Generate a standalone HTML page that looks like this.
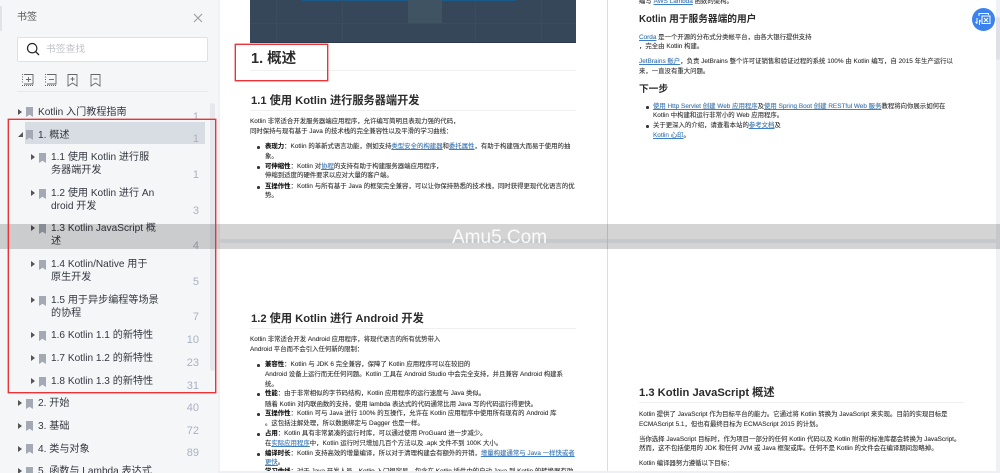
<!DOCTYPE html>
<html lang="zh"><head><meta charset="utf-8"><style>
html,body{margin:0;padding:0;width:1000px;height:473px;overflow:hidden;background:#f0f1f5}
body{position:relative;font-family:"Liberation Sans","Noto Sans CJK SC",sans-serif}
div,a,svg{position:absolute}
.t{white-space:nowrap;line-height:12px;height:12px}
.s{font-size:10.1px;color:#33373f;margin-top:1.5px}
.n{font-size:11px;color:#aab1c2;width:30px;text-align:right;left:169px;line-height:12px;margin-top:1px}
.p{font-size:6.4px;color:#333;white-space:nowrap;line-height:10px;height:10px;margin-top:1px;text-shadow:0 0 .4px rgba(0,0,0,.45)}
.p a{position:static;color:#3b7fc4;text-decoration:underline}
.p b{color:#111}
.h{font-weight:bold;color:#2b2b2b;white-space:nowrap;line-height:14px;margin-top:1px}
.l{height:1px;background:#f0f0f0}
.d{width:2.5px;height:2.5px;border-radius:50%;background:#333;margin-top:1px}
.ar{width:0;height:0;border-left:4px solid #555;border-top:3.5px solid transparent;border-bottom:3.5px solid transparent;margin-top:1px}
.bm{width:7px;height:10px;background:#a4a9b3;clip-path:polygon(0 0,100% 0,100% 100%,50% 78%,0 100%);margin-top:1px}
.g{background:#3b4c5f}
</style></head><body>
<div style="left:0;top:0;width:218px;height:473px;background:#f5f6f8"></div>
<div style="left:0;top:6px;width:2px;height:25px;background:#e0e3e8"></div>
<div class="t" style="left:17px;top:12px;font-size:10px;color:#555">书签</div>
<svg style="left:193px;top:13px" width="10" height="10" viewBox="0 0 10 10"><path d="M1 1L9 9M9 1L1 9" stroke="#999" stroke-width="1" fill="none"/></svg>
<div style="left:17px;top:37px;width:189px;height:23px;background:#fff;border:1px solid #dfe1e6;border-radius:2px"></div>
<svg style="left:26px;top:42px" width="14" height="14" viewBox="0 0 14 14"><circle cx="6.2" cy="6.2" r="4.7" stroke="#222" stroke-width="1.2" fill="none"/><path d="M9.6 9.6L13 13" stroke="#222" stroke-width="1.3"/></svg>
<div class="t" style="left:46px;top:44px;font-size:9.8px;color:#c0c2c8">书签查找</div>
<svg style="left:21px;top:73px" width="84" height="14" viewBox="0 0 84 14" fill="none" stroke="#666" stroke-width=".9">
<path d="M3 1.5H12V11H3" /><path d="M1 1.5H2M1 4H2M1 6.5H2M1 9H2M1 12.5H12" stroke-dasharray="1 1"/><path d="M5 6.5H10M7.5 4V9"/>
<path d="M26 1.5H35V11H26"/><path d="M24 1.5H25M24 4H25M24 6.5H25M24 9H25M24 12.5H35" stroke-dasharray="1 1"/><path d="M28 6.5H33"/>
<path d="M47 1.5H56V13L51.5 10L47 13Z"/><path d="M49.5 6H53.5M51.5 4V8"/>
<path d="M70 1.5H79V13L74.5 10L70 13Z"/><path d="M72.5 6H76.5"/></svg>
<div style="left:17px;top:91px;width:191px;height:1px;background:#e6e8ec"></div>
<div style="left:25px;top:122px;width:180px;height:22px;background:#d8dce3"></div>
<div style="left:210px;top:103px;width:5px;height:268px;border-radius:3px;background:#e6e8ec"></div>

<div class="ar" style="left:18px;top:108px"></div><div class="bm" style="left:26px;top:106px"></div><div class="t s" style="left:38px;top:105px">Kotlin 入门教程指南</div><div class="n" style="top:110px">1</div>
<div style="left:18px;top:132px;width:0;height:0;border-bottom:5px solid #555;border-left:5px solid transparent"></div><div class="bm" style="left:26px;top:129px"></div><div class="t s" style="left:38px;top:128px">1. 概述</div><div class="n" style="top:132px">1</div>

<div class="ar" style="left:31px;top:153px"></div><div class="bm" style="left:39px;top:152px"></div><div class="t s" style="left:51px;top:150px">1.1 使用 Kotlin 进行服</div><div class="t s" style="left:51px;top:163px">务器端开发</div><div class="n" style="top:168px">1</div>
<div class="ar" style="left:31px;top:189px"></div><div class="bm" style="left:39px;top:188px"></div><div class="t s" style="left:51px;top:186px">1.2 使用 Kotlin 进行 An</div><div class="t s" style="left:51px;top:199px">droid 开发</div><div class="n" style="top:204px">3</div>
<div class="ar" style="left:31px;top:224px"></div><div class="bm" style="left:39px;top:223px"></div><div class="t s" style="left:51px;top:221px">1.3 Kotlin JavaScript 概</div><div class="t s" style="left:51px;top:234px">述</div><div class="n" style="top:239px">4</div>
<div class="ar" style="left:31px;top:260px"></div><div class="bm" style="left:39px;top:259px"></div><div class="t s" style="left:51px;top:257px">1.4 Kotlin/Native 用于</div><div class="t s" style="left:51px;top:270px">原生开发</div><div class="n" style="top:275px">5</div>
<div class="ar" style="left:31px;top:296px"></div><div class="bm" style="left:39px;top:295px"></div><div class="t s" style="left:51px;top:293px">1.5 用于异步编程等场景</div><div class="t s" style="left:51px;top:306px">的协程</div><div class="n" style="top:310px">7</div>
<div class="ar" style="left:31px;top:331px"></div><div class="bm" style="left:39px;top:330px"></div><div class="t s" style="left:51px;top:328px">1.6 Kotlin 1.1 的新特性</div><div class="n" style="top:333px">10</div>
<div class="ar" style="left:31px;top:354px"></div><div class="bm" style="left:39px;top:353px"></div><div class="t s" style="left:51px;top:351px">1.7 Kotlin 1.2 的新特性</div><div class="n" style="top:356px">23</div>
<div class="ar" style="left:31px;top:377px"></div><div class="bm" style="left:39px;top:376px"></div><div class="t s" style="left:51px;top:374px">1.8 Kotlin 1.3 的新特性</div><div class="n" style="top:379px">31</div>
<div class="ar" style="left:18px;top:399px"></div><div class="bm" style="left:26px;top:398px"></div><div class="t s" style="left:38px;top:396px">2. 开始</div><div class="n" style="top:401px">40</div>
<div class="ar" style="left:18px;top:422px"></div><div class="bm" style="left:26px;top:420px"></div><div class="t s" style="left:38px;top:419px">3. 基础</div><div class="n" style="top:424px">72</div>
<div class="ar" style="left:18px;top:445px"></div><div class="bm" style="left:26px;top:443px"></div><div class="t s" style="left:38px;top:442px">4. 类与对象</div><div class="n" style="top:446px">89</div>
<div class="ar" style="left:18px;top:467px"></div><div class="bm" style="left:26px;top:466px"></div><div class="t s" style="left:38px;top:464px">5. 函数与 Lambda 表达式</div>

<!-- pages -->
<div style="left:220px;top:0;width:387px;height:473px;background:#fff"></div>
<div style="left:608px;top:0;width:388px;height:473px;background:#fff"></div>
<div style="left:218px;top:239px;width:782px;height:4px;background:#f0f1f5"></div>
<div style="left:607px;top:0;width:1px;height:473px;background:#dcdde0"></div>

<!-- dark banner -->
<div style="left:250px;top:0;width:326px;height:43px;background:#36475a;border-bottom:1px solid #2c3b4b;box-sizing:border-box"></div>
<div style="left:302px;top:0;width:214px;height:1px;background:#1a5a8a"></div>
<div style="left:408px;top:0;width:34px;height:24px;background:#405362"></div>
<div class="g" style="left:250px;top:23px;width:326px;height:1px"></div>
<div class="g" style="left:276px;top:0;width:1px;height:42px"></div>
<div class="g" style="left:342px;top:0;width:1px;height:42px"></div>
<div class="g" style="left:475px;top:0;width:1px;height:42px"></div>
<div class="g" style="left:541px;top:0;width:1px;height:42px"></div>

<div class="h" style="left:251px;top:50px;font-size:14.5px;line-height:17px">1. 概述</div>
<div class="l" style="left:250px;top:70px;width:326px"></div>
<div class="h" style="left:251px;top:93px;font-size:11.2px">1.1 使用 Kotlin 进行服务器端开发</div>
<div class="l" style="left:250px;top:110px;width:326px"></div>
<div class="p" style="left:250px;top:116px">Kotlin 非常适合开发服务器端应用程序，允许编写简明且表现力强的代码，</div>
<div class="p" style="left:250px;top:126px">同时保持与现有基于 Java 的技术栈的完全兼容性以及平滑的学习曲线：</div>
<div class="d" style="left:257px;top:145px"></div>
<div class="p" style="left:265px;top:141px"><b>表现力</b>：Kotlin 的革新式语言功能，例如支持<a>类型安全的构建器</a>和<a>委托属性</a>，有助于构建强大而易于使用的抽</div>
<div class="p" style="left:265px;top:151px">象。</div>
<div class="d" style="left:257px;top:165px"></div>
<div class="p" style="left:265px;top:161px"><b>可伸缩性</b>：Kotlin 对<a>协程</a>的支持有助于构建服务器端应用程序，</div>
<div class="p" style="left:265px;top:170px">伸缩到适度的硬件要求以应对大量的客户端。</div>
<div class="d" style="left:257px;top:185px"></div>
<div class="p" style="left:265px;top:181px"><b>互操作性</b>：Kotlin 与所有基于 Java 的框架完全兼容，可以让你保持熟悉的技术栈，同时获得更现代化语言的优</div>
<div class="p" style="left:265px;top:190px">势。</div>

<div class="p" style="left:639px;top:-4px">编写 <a>AWS Lambda</a> 函数的架构。</div>
<div class="h" style="left:639px;top:12px;font-size:9.7px">Kotlin 用于服务器端的用户</div>
<div class="p" style="left:639px;top:32px"><a>Corda</a> 是一个开源的分布式分类帐平台，由各大银行提供支持</div>
<div class="p" style="left:639px;top:41px">，完全由 Kotlin 构建。</div>
<div class="p" style="left:639px;top:56px"><a>JetBrains 账户</a>，负责 JetBrains 整个许可证销售和验证过程的系统 100% 由 Kotlin 编写，自 2015 年生产运行以</div>
<div class="p" style="left:639px;top:66px">来，一直没有重大问题。</div>
<div class="h" style="left:639px;top:82px;font-size:9.7px">下一步</div>
<div class="d" style="left:646px;top:105px"></div>
<div class="p" style="left:653px;top:101px"><a>使用 Http Servlet 创建 Web 应用程序</a>及<a>使用 Spring Boot 创建 RESTful Web 服务</a>教程将向你展示如何在</div>
<div class="p" style="left:653px;top:110px">Kotlin 中构建和运行非常小的 Web 应用程序。</div>
<div class="d" style="left:646px;top:124px"></div>
<div class="p" style="left:653px;top:120px">关于更深入的介绍，请查看本站的<a>参考文档</a>及</div>
<div class="p" style="left:653px;top:130px"><a>Kotlin 心印</a>。</div>

<div class="h" style="left:251px;top:311px;font-size:11.2px">1.2 使用 Kotlin 进行 Android 开发</div>
<div class="l" style="left:250px;top:328px;width:326px"></div>
<div class="p" style="left:250px;top:334px">Kotlin 非常适合开发 Android 应用程序，将现代语言的所有优势带入</div>
<div class="p" style="left:250px;top:344px">Android 平台而不会引入任何新的限制：</div>
<div class="d" style="left:257px;top:363px"></div>
<div class="p" style="left:265px;top:359px"><b>兼容性</b>：Kotlin 与 JDK 6 完全兼容，保障了 Kotlin 应用程序可以在较旧的</div>
<div class="p" style="left:265px;top:369px">Android 设备上运行而无任何问题。Kotlin 工具在 Android Studio 中会完全支持，并且兼容 Android 构建系</div>
<div class="p" style="left:265px;top:379px">统。</div>
<div class="d" style="left:257px;top:392px"></div>
<div class="p" style="left:265px;top:388px"><b>性能</b>：由于非常相似的字节码结构，Kotlin 应用程序的运行速度与 Java 类似。</div>
<div class="p" style="left:265px;top:399px">随着 Kotlin 对内联函数的支持，使用 lambda 表达式的代码通常比用 Java 写的代码运行得更快。</div>
<div class="d" style="left:257px;top:412px"></div>
<div class="p" style="left:265px;top:408px"><b>互操作性</b>：Kotlin 可与 Java 进行 100% 的互操作，允许在 Kotlin 应用程序中使用所有现有的 Android 库</div>
<div class="p" style="left:265px;top:418px">。这包括注解处理，所以数据绑定与 Dagger 也是一样。</div>
<div class="d" style="left:257px;top:432px"></div>
<div class="p" style="left:265px;top:428px"><b>占用</b>：Kotlin 具有非常紧凑的运行时库，可以通过使用 ProGuard 进一步减少。</div>
<div class="p" style="left:265px;top:438px">在<a>实际应用程序</a>中，Kotlin 运行时只增加几百个方法以及 .apk 文件不到 100K 大小。</div>
<div class="d" style="left:257px;top:452px"></div>
<div class="p" style="left:265px;top:448px"><b>编译时长</b>：Kotlin 支持高效的增量编译，所以对于清理构建会有额外的开销，<a>增量构建通常与 Java 一样快或者</a></div>
<div class="p" style="left:265px;top:457px"><a>更快</a>。</div>
<div class="d" style="left:257px;top:470px"></div>
<div class="p" style="left:265px;top:466px"><b>学习曲线</b>：对于 Java 开发人员，Kotlin 入门很容易。包含在 Kotlin 插件中的自动 Java 到 Kotlin 的转换器有助</div>

<div class="h" style="left:639px;top:385px;font-size:11.2px">1.3 Kotlin JavaScript 概述</div>
<div class="l" style="left:639px;top:402px;width:325px"></div>
<div class="p" style="left:639px;top:409px">Kotlin 提供了 JavaScript 作为目标平台的能力。它通过将 Kotlin 转换为 JavaScript 来实现。目前的实现目标是</div>
<div class="p" style="left:639px;top:419px">ECMAScript 5.1，但也有最终目标为 ECMAScript 2015 的计划。</div>
<div class="p" style="left:639px;top:434px">当你选择 JavaScript 目标时，作为项目一部分的任何 Kotlin 代码以及 Kotlin 附带的标准库都会转换为 JavaScript。</div>
<div class="p" style="left:639px;top:443px">然而，这不包括使用的 JDK 和任何 JVM 或 Java 框架或库。任何不是 Kotlin 的文件会在编译期间忽略掉。</div>
<div class="p" style="left:639px;top:458px">Kotlin 编译器努力遵循以下目标：</div>

<div style="left:218px;top:471px;width:782px;height:2px;background:#eef0f4"></div>
<div style="left:996px;top:0;width:4px;height:473px;background:#f0f1f5"></div>
<div style="left:996px;top:17px;width:4px;height:43px;border-radius:2px;background:#dfe1e6"></div>

<div style="left:972px;top:8px;width:23px;height:23px;border-radius:50%;background:#3b82ee"></div>
<svg style="left:974px;top:11px" width="18" height="17" viewBox="0 0 18 17" fill="none" stroke="#fff" stroke-width="1"><path d="M5 5V2.5H14.5V4"/><rect x="8" y="5" width="8" height="7.5"/><path d="M10 7L14 11M14 7L10 11"/><path d="M3 7V12.5M3 12.5L1.5 11M5.5 14V9M5.5 9L7 10.5"/></svg>

<!-- watermark band -->
<div style="left:0;top:224px;width:1000px;height:25px;background:rgba(0,0,0,.17)"></div>
<div style="left:452px;top:227px;font-size:19px;line-height:22px;color:#fff;white-space:nowrap;opacity:.9">Amu5.Com</div>

<!-- red annotation boxes -->
<div style="left:8px;top:119px;width:206px;height:272px;border:1px solid #ee3338;box-shadow:0 0 0 .4px #ee3338"></div>
<div style="left:235px;top:44px;width:91px;height:35px;border:1px solid #ee3338;box-shadow:0 0 0 .4px #ee3338"></div>
</body></html>
